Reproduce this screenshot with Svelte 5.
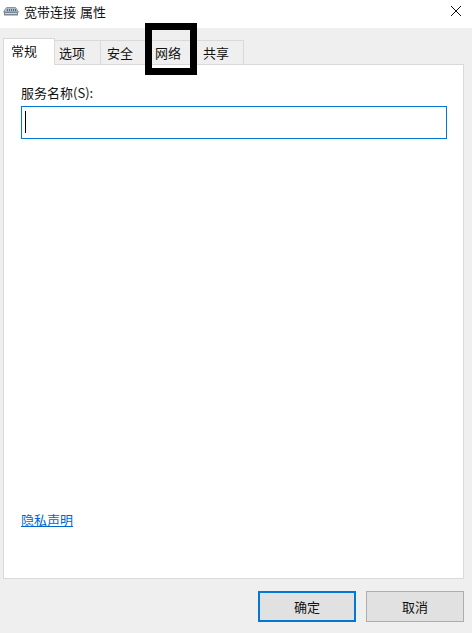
<script lang="ts">
	const tabs = ['常规', '选项', '安全', '网络', '共享'];
	let active = $state(0);
	let service = $state('');
</script>

<div class="dialog">
	<header class="titlebar">
		<svg class="net-icon" width="16" height="12" viewBox="0 0 16 12" aria-hidden="true">
			<path d="M3.5 2.5h9L15.5 7H.5z" fill="#b4bcc4" stroke="#8b949c" stroke-width="1" />
			<path d="M1 7h14v3.5H1z" fill="#7c8790" />
			<path d="M4 5h1M6 5h1M8 5h1M10 5h1M12 5h1" stroke="#3f6f9f" stroke-width="2" />
			<path d="M2 8.5h12" stroke="#cfd5da" stroke-width="1" />
		</svg>
		<span class="title">宽带连接 属性</span>
		<button class="close" aria-label="关闭">
			<svg width="10" height="10" viewBox="0 0 10 10" aria-hidden="true">
				<path d="M0 0l10 10M10 0L0 10" stroke="#111" stroke-width="1" fill="none" />
			</svg>
		</button>
	</header>

	<div class="body">
		<nav class="tabs">
			{#each tabs as tab, i (tab)}
				<button class="tab" class:active={i === active} onclick={() => (active = i)}>{tab}</button>
			{/each}
		</nav>

		<section class="panel">
			<label class="field">
				<span>服务名称(S):</span>
				<span class="input-wrap">
					<input bind:value={service} />
					<i class="caret"></i>
				</span>
			</label>
			<a class="privacy" href="#privacy">隐私声明</a>
		</section>

		<footer class="actions">
			<button class="btn primary">确定</button>
			<button class="btn">取消</button>
		</footer>
	</div>

	<div class="highlight"></div>
</div>

<style>
	:global(body) {
		margin: 0;
	}

	.dialog {
		position: relative;
		width: 472px;
		height: 633px;
		display: flex;
		flex-direction: column;
		overflow: hidden;
		background: #fff;
		font-family: "Noto Sans CJK SC", "Liberation Sans", sans-serif;
		font-size: 13px;
		color: #111;
	}

	.titlebar {
		height: 28px;
		flex: none;
		display: flex;
		align-items: flex-start;
		padding-left: 3px;
		background: #fff;
	}

	.net-icon {
		margin: 5px 5px 0 0;
	}

	.title {
		flex: 1;
		line-height: 24px;
		word-spacing: 1px;
	}

	.close {
		width: 32px;
		height: 22px;
		padding: 0;
		display: flex;
		align-items: center;
		justify-content: center;
		background: none;
		border: none;
	}

	.body {
		flex: 1;
		display: flex;
		flex-direction: column;
		padding: 0 8px 0 3px;
		background: #efefef;
	}

	.tabs {
		height: 37px;
		flex: none;
		display: flex;
		align-items: flex-end;
		margin-bottom: -1px;
		position: relative;
		z-index: 1;
	}

	.tab {
		width: 49px;
		height: 24px;
		margin-left: -1px;
		margin-bottom: 1px;
		padding: 0 0 0 6px;
		text-align: left;
		background: #efefef;
		border: 1px solid #d9d9d9;
		border-bottom: none;
		font: inherit;
		line-height: 23px;
		color: inherit;
	}

	.tab:first-child {
		width: 52px;
		height: 27px;
		margin-left: 0;
		margin-bottom: 0;
		padding: 0 0 5px 7px;
		background: #fff;
	}

	.tab:nth-child(2) {
		width: 47px;
		padding-left: 4px;
	}

	.tab:last-child {
		width: 48px;
	}

	.panel {
		height: 515px;
		flex: none;
		box-sizing: border-box;
		display: flex;
		flex-direction: column;
		justify-content: space-between;
		padding: 19px 16px 49px 17px;
		background: #fff;
		border: 1px solid #d9d9d9;
	}

	.field {
		display: flex;
		flex-direction: column;
		gap: 4px;
		line-height: 18px;
	}

	.input-wrap {
		position: relative;
		display: block;
	}

	input {
		display: block;
		width: 100%;
		height: 33px;
		box-sizing: border-box;
		padding: 0 4px;
		border: 1px solid #0078d7;
		outline: none;
		font: inherit;
	}

	.caret {
		position: absolute;
		left: 4px;
		top: 5px;
		width: 1px;
		height: 22px;
		background: #000;
	}

	.privacy {
		align-self: flex-start;
		line-height: 18px;
		color: #0066cc;
	}

	.actions {
		display: flex;
		justify-content: flex-end;
		gap: 10px;
		margin-top: 12px;
	}

	.btn {
		width: 98px;
		height: 31px;
		box-sizing: border-box;
		padding: 0;
		background: #e1e1e1;
		border: 1px solid #adadad;
		font: inherit;
		color: inherit;
	}

	.btn.primary {
		border: 2px solid #0078d7;
	}

	.highlight {
		position: absolute;
		left: 145px;
		top: 23px;
		width: 52px;
		height: 52px;
		box-sizing: border-box;
		border: 7px solid #000;
		pointer-events: none;
		z-index: 2;
	}
</style>
